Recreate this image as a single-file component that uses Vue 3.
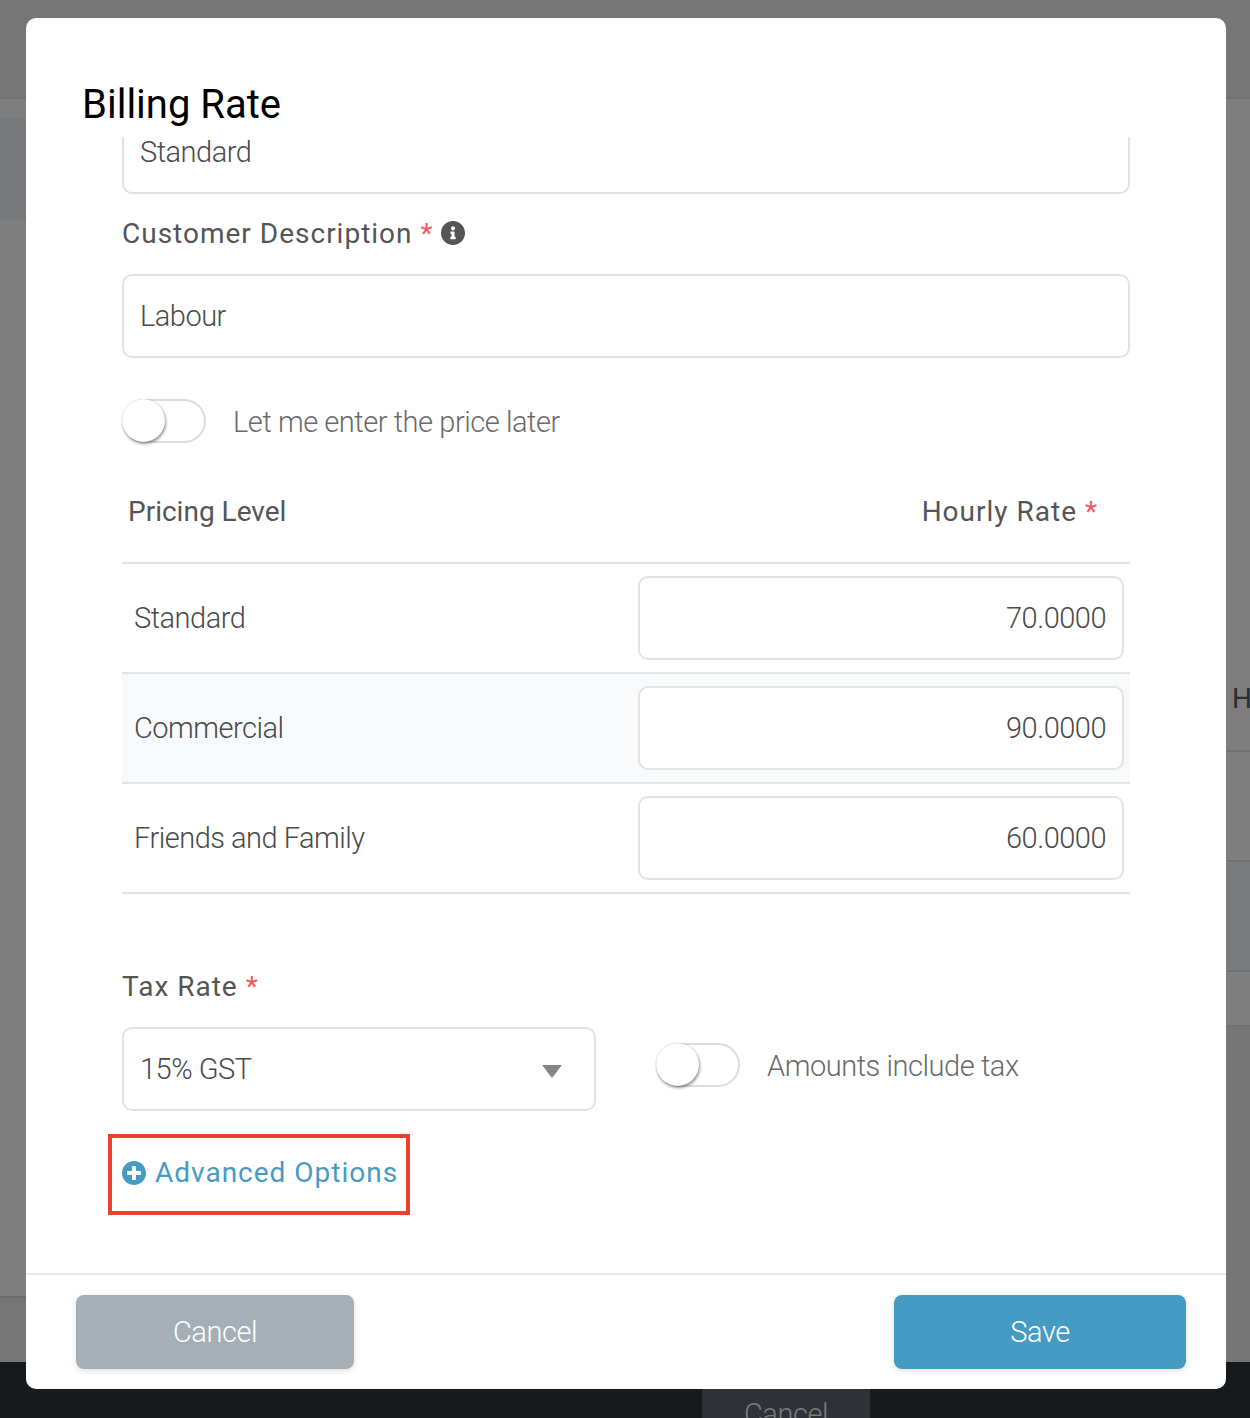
<template>
  <div class="page">
    <!-- page behind the overlay -->
    <div class="backdrop">
      <div class="bg-top"></div>
      <div class="bg-left"></div>
      <span class="bg-letter">H</span>
      <div class="bg-tint"></div>
      <div class="bg-line" style="top: 750px"></div>
      <div class="bg-line" style="top: 860px"></div>
      <div class="bg-line" style="top: 970px"></div>
      <div class="bg-line" style="top: 1025px"></div>
      <div class="bg-lower-right"></div>
      <div class="bg-lower-left"></div>
      <div class="bg-footer"></div>
      <div class="bg-cancel">Cancel</div>
    </div>

    <div class="modal">
      <h1 class="modal-title">Billing Rate</h1>

      <div class="modal-body">
        <div class="scroll-inner">
          <input class="field" v-model="name" type="text" />

          <label class="label desc-label">
            <span>Customer Description</span>
            <span class="req">*</span>
            <svg class="info" viewBox="8 8 496 496"><path fill="#555" d="M256 8C119.043 8 8 119.083 8 256c0 136.997 111.043 248 248 248s248-111.003 248-248C504 119.083 392.957 8 256 8zm0 110c23.196 0 42 18.804 42 42s-18.804 42-42 42-42-18.804-42-42 18.804-42 42-42zm56 254c0 6.627-5.373 12-12 12h-88c-6.627 0-12-5.373-12-12v-24c0-6.627 5.373-12 12-12h12v-64h-12c-6.627 0-12-5.373-12-12v-24c0-6.627 5.373-12 12-12h64c6.627 0 12 5.373 12 12v100h12c6.627 0 12 5.373 12 12v24z"/></svg>
          </label>
          <input class="field" v-model="description" type="text" />

          <div class="toggle-row price-later">
            <div class="toggle"><div class="knob"></div></div>
            <span class="toggle-text">Let me enter the price later</span>
          </div>

          <div class="table-head">
            <span class="head-level">Pricing Level</span>
            <span class="head-rate">Hourly Rate <span class="req">*</span></span>
          </div>

          <div
            v-for="(row, i) in rates"
            :key="row.level"
            class="rate-row"
            :class="{ alt: i === 1 }"
          >
            <span class="rate-name">{{ row.level }}</span>
            <input class="field rate-input" v-model="row.rate" type="text" />
          </div>

          <label class="label tax-label">Tax Rate <span class="req">*</span></label>
          <div class="tax-row">
            <div class="select-wrap">
              <select class="field select" v-model="tax">
                <option>15% GST</option>
              </select>
              <span class="caret"></span>
            </div>
            <div class="toggle-row tax-toggle">
              <div class="toggle"><div class="knob"></div></div>
              <span class="toggle-text">Amounts include tax</span>
            </div>
          </div>

          <a class="advanced">
            <svg class="plus" viewBox="8 8 496 496"><path fill="#469bc4" d="M256 8C119 8 8 119 8 256s111 248 248 248 248-111 248-248S393 8 256 8zm144 276c0 6.6-5.4 12-12 12h-92v92c0 6.6-5.4 12-12 12h-56c-6.6 0-12-5.4-12-12v-92h-92c-6.6 0-12-5.4-12-12v-56c0-6.6 5.4-12 12-12h92v-92c0-6.6 5.4-12 12-12h56c6.6 0 12 5.4 12 12v92h92c6.6 0 12 5.4 12 12v56z"/></svg>
            <span>Advanced Options</span>
          </a>
        </div>
      </div>

      <div class="modal-footer">
        <button class="btn cancel">Cancel</button>
        <button class="btn save">Save</button>
      </div>
    </div>
  </div>
</template>

<script setup>
import { ref } from 'vue'

const name = ref('Standard')
const description = ref('Labour')
const tax = ref('15% GST')
const rates = ref([
  { level: 'Standard', rate: '70.0000' },
  { level: 'Commercial', rate: '90.0000' },
  { level: 'Friends and Family', rate: '60.0000' }
])
</script>

<style scoped>
.page {
  position: relative;
  width: 1250px;
  height: 1418px;
  overflow: hidden;
  background: #7e7e7e;
  font-family: Roboto, "Liberation Sans", sans-serif;
  padding: 18px 24px 29px 26px;
  box-sizing: border-box;
}
.backdrop {
  position: absolute;
  inset: 0;
}
.bg-top {
  position: absolute;
  left: 0;
  right: 0;
  top: 0;
  height: 97px;
  background: #767676;
  border-bottom: 2px solid #717171;
}
.bg-left {
  position: absolute;
  left: 0;
  top: 118px;
  width: 26px;
  height: 102px;
  background: #77797c;
}
.bg-letter {
  position: absolute;
  left: 1232px;
  top: 683px;
  font-size: 28px;
  line-height: 32px;
  color: #2c2c2c;
}
.bg-tint {
  position: absolute;
  left: 1226px;
  right: 0;
  top: 860px;
  height: 110px;
  background: #7a7b7d;
}
.bg-line {
  position: absolute;
  left: 1226px;
  right: 0;
  height: 2px;
  background: #717171;
}
.bg-lower-right {
  position: absolute;
  left: 1226px;
  right: 0;
  top: 1027px;
  bottom: 0;
  background: #757575;
}
.bg-lower-left {
  position: absolute;
  left: 0;
  width: 26px;
  top: 1296px;
  bottom: 0;
  background: #767676;
  border-top: 2px solid #6c6c6c;
}
.bg-footer {
  position: absolute;
  left: 0;
  right: 0;
  top: 1362px;
  bottom: 0;
  background: #161a1d;
}
.bg-cancel {
  position: absolute;
  left: 702px;
  top: 1389px;
  width: 168px;
  height: 60px;
  background: #2e3236;
  color: #787a7c;
  font-size: 29px;
  font-weight: 300;
  letter-spacing: -0.45px;
  line-height: 50px;
  text-align: center;
}

.modal {
  position: relative;
  height: 100%;
  display: flex;
  flex-direction: column;
  background: #fff;
  border-radius: 10px;
}
.modal-title {
  margin: 0;
  padding: 61px 0 7px 56px;
  height: 119px;
  box-sizing: border-box;
  font-size: 40px;
  line-height: 51px;
  font-weight: 400;
  color: #000;
}
.modal-body {
  flex: 1;
  min-height: 0;
  overflow: hidden;
  padding: 0 96px;
}
.scroll-inner {
  margin-top: -27px;
}
.field {
  display: block;
  width: 100%;
  height: 84px;
  box-sizing: border-box;
  padding: 0 16px;
  border: 2px solid #e3e3e3;
  border-radius: 10px;
  background: #fff;
  font-family: inherit;
  font-size: 29px;
  font-weight: 300;
  letter-spacing: -0.5px;
  color: #4a4a4a;
  outline: none;
}
.label {
  display: block;
  font-size: 28px;
  font-weight: 400;
  letter-spacing: 1px;
  color: #555;
}
.req {
  color: #f05a5a;
}
.desc-label {
  display: flex;
  align-items: center;
  height: 34px;
  margin: 22px 0 24px;
}
.desc-label .req {
  margin-left: 8px;
}
.info {
  width: 24px;
  height: 24px;
  margin-left: 7px;
}
.toggle-row {
  display: flex;
  align-items: center;
  gap: 27px;
}
.price-later {
  margin-top: 41px;
}
.toggle {
  width: 84px;
  height: 44px;
  box-sizing: border-box;
  border: 2px solid #dcdcdc;
  border-radius: 22px;
  background: #fff;
  position: relative;
}
.knob {
  position: absolute;
  left: -2px;
  top: -2px;
  width: 43px;
  height: 43px;
  border-radius: 50%;
  background: #fff;
  box-shadow: 1px 2px 3px rgba(0, 0, 0, 0.4), 0 0 1px rgba(0, 0, 0, 0.25);
}
.toggle-text {
  padding-top: 2px;
  font-size: 29px;
  font-weight: 300;
  letter-spacing: -0.45px;
  color: #6a6a6a;
}
.table-head {
  display: flex;
  justify-content: space-between;
  align-items: center;
  height: 121px;
  padding: 17px 32px 0 6px;
  border-bottom: 2px solid #e3e4e8;
  box-sizing: border-box;
  font-size: 28px;
  color: #555;
}
.head-rate {
  letter-spacing: 1px;
}
.rate-row {
  display: flex;
  justify-content: space-between;
  align-items: center;
  height: 110px;
  box-sizing: border-box;
  padding: 0 6px 0 12px;
  border-bottom: 2px solid #e3e4e8;
}
.rate-row.alt {
  background: #f7f9fb;
}
.rate-name {
  font-size: 29px;
  font-weight: 300;
  letter-spacing: -0.5px;
  color: #4a4a4a;
}
.rate-input {
  width: 486px;
  text-align: right;
}
.tax-label {
  margin-top: 76px;
  height: 34px;
  line-height: 34px;
}
.tax-row {
  display: flex;
  align-items: flex-start;
  gap: 60px;
  margin-top: 23px;
}
.select-wrap {
  position: relative;
  width: 474px;
}
.select {
  appearance: none;
  -webkit-appearance: none;
}
.caret {
  position: absolute;
  right: 34px;
  top: 38px;
  width: 0;
  height: 0;
  border-left: 10px solid transparent;
  border-right: 10px solid transparent;
  border-top: 13px solid #858585;
}
.tax-toggle {
  margin-top: 16px;
}
.advanced {
  display: inline-flex;
  align-items: center;
  gap: 9px;
  height: 81px;
  box-sizing: border-box;
  margin: 23px 0 0 -14px;
  padding: 0 8px 4px 10px;
  border: 4px solid #e8432a;
  font-size: 28px;
  letter-spacing: 1px;
  color: #469bc4;
}
.plus {
  width: 24px;
  height: 24px;
}
.modal-footer {
  flex: none;
  height: 116px;
  box-sizing: border-box;
  display: flex;
  justify-content: space-between;
  padding: 20px 40px 0 50px;
  border-top: 2px solid #e8ecf0;
}
.btn {
  height: 74px;
  padding-bottom: 1px;
  border: none;
  border-radius: 8px;
  color: #fff;
  font-family: inherit;
  font-size: 29px;
  font-weight: 300;
  letter-spacing: -0.45px;
  box-shadow: 0 2px 6px rgba(0, 0, 0, 0.12);
}
.cancel {
  width: 278px;
  background: #a5afb5;
}
.save {
  width: 292px;
  background: #469bc4;
}
</style>
